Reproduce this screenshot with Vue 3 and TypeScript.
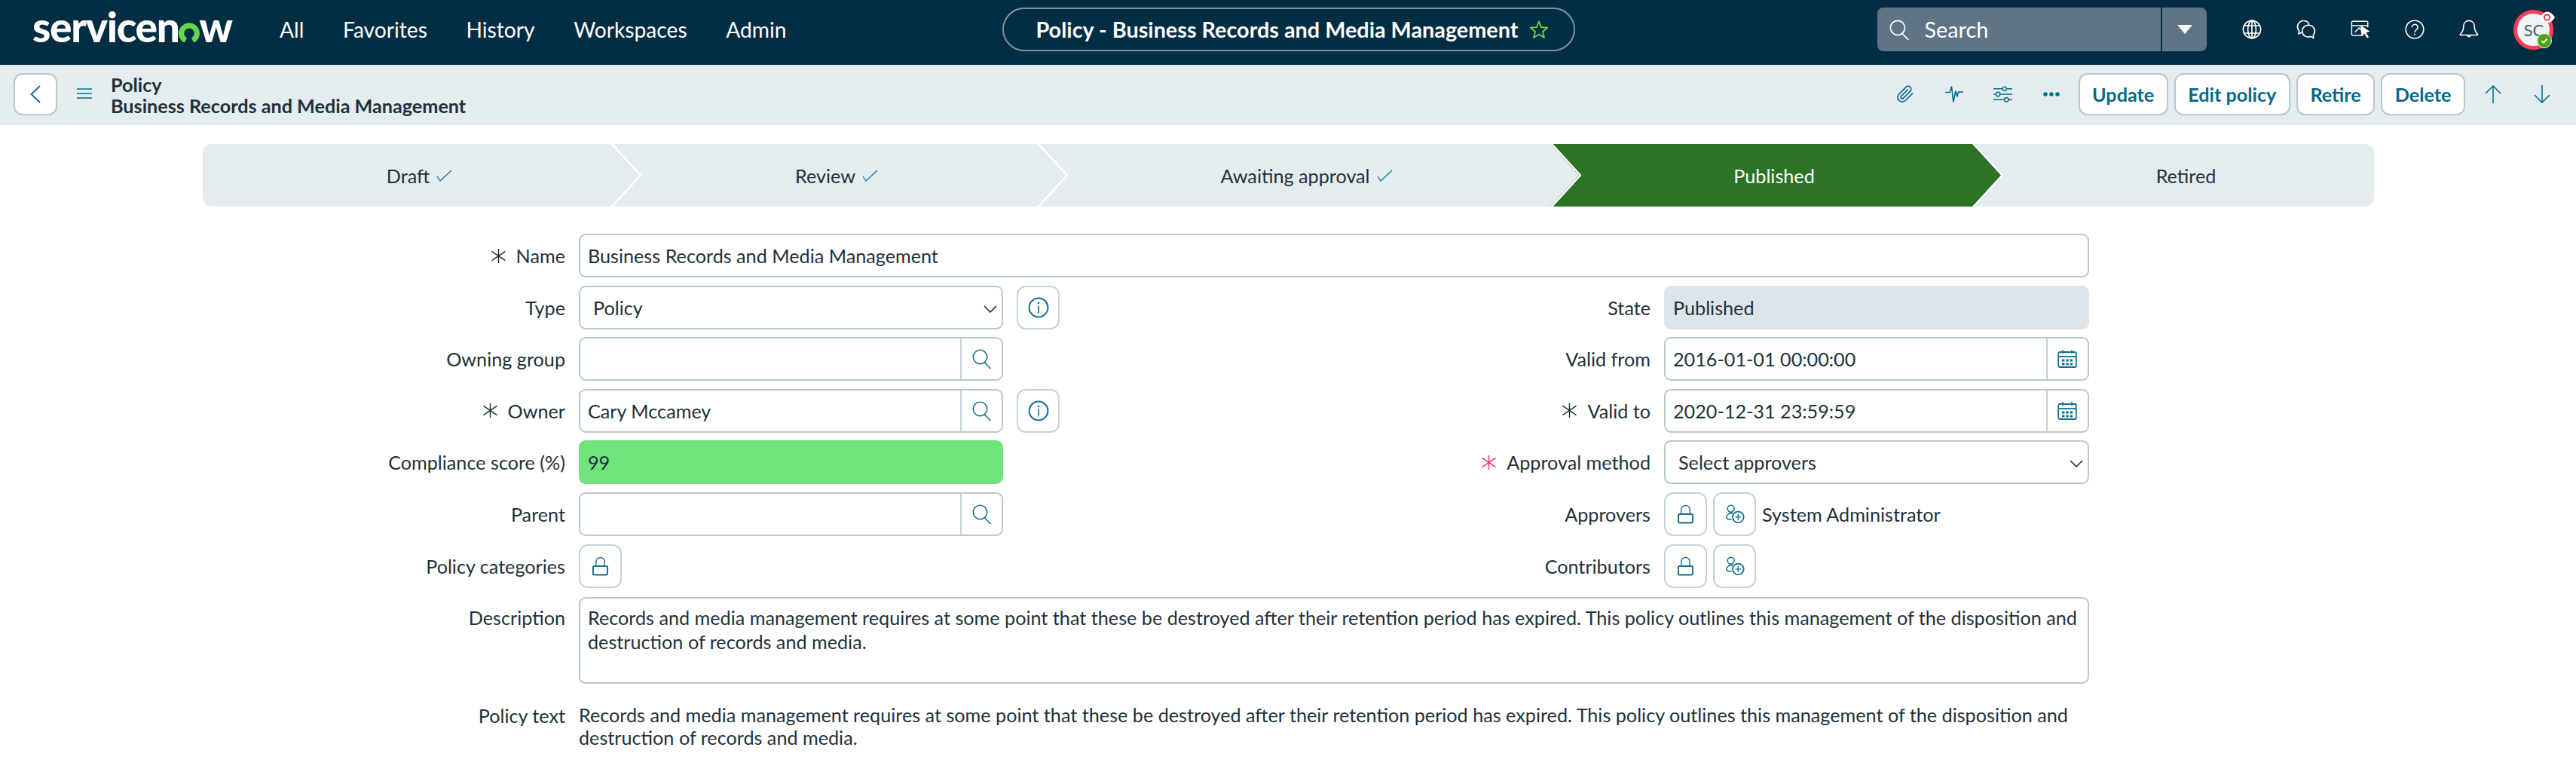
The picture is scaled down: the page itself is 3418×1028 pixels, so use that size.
<script setup lang="ts">
interface Step {
  name: string
  done?: boolean
  current?: boolean
}

const navItems = ['All', 'Favorites', 'History', 'Workspaces', 'Admin']
const headerIcons = ['i-globe', 'i-chat', 'i-window', 'i-help', 'i-bell']
const actions = ['Update', 'Edit policy', 'Retire', 'Delete']
const steps: Step[] = [
  { name: 'Draft', done: true },
  { name: 'Review', done: true },
  { name: 'Awaiting approval', done: true },
  { name: 'Published', current: true },
  { name: 'Retired' }
]
const policyCopy =
  'Records and media management requires at some point that these be destroyed after their retention period has expired. This policy outlines this management of the disposition and destruction of records and media.'
</script>

<template>
  <svg class="sprite" xmlns="http://www.w3.org/2000/svg">
    <symbol id="i-search" viewBox="0 0 26 26"><circle cx="10.5" cy="10.5" r="9.2" fill="none" stroke="currentColor" stroke-width="1.6"/><path d="M16.5 18l7.5 7.5" fill="none" stroke="currentColor" stroke-width="1.6" stroke-linecap="round"/></symbol>
    <symbol id="i-info" viewBox="0 0 28 28"><circle cx="14" cy="14" r="12.4" fill="none" stroke="currentColor" stroke-width="2"/><path d="M14 12v9" stroke="currentColor" stroke-width="1.6" stroke-linecap="round"/><circle cx="14" cy="8" r="1.3" fill="currentColor"/></symbol>
    <symbol id="i-lock" viewBox="0 0 24 26"><path d="M6 13V7a6 6 0 0 1 12 0v6" fill="none" stroke="currentColor" stroke-width="1.4"/><rect x="2" y="13" width="20" height="12" rx="2" fill="none" stroke="currentColor" stroke-width="2"/></symbol>
    <symbol id="i-adduser" viewBox="0 0 28 26"><circle cx="9" cy="5.5" r="4.6" fill="none" stroke="currentColor" stroke-width="1.6"/><path d="M11.5 12a6.5 6.5 0 0 0-8.5 4.5c-.4 2 1 3.5 3 3.5h4" fill="none" stroke="currentColor" stroke-width="1.6"/><circle cx="19" cy="17" r="7.6" fill="none" stroke="currentColor" stroke-width="1.8"/><path d="M19 13v8M15 17h8" stroke="currentColor" stroke-width="1.5"/></symbol>
    <symbol id="i-cal" viewBox="0 0 26 24"><rect x="1.2" y="3" width="23.6" height="20" rx="2" fill="none" stroke="currentColor" stroke-width="1.8"/><path d="M1 9h24" stroke="currentColor" stroke-width="1.8"/><path d="M7 0v5M19 0v5" stroke="currentColor" stroke-width="1.4"/><path d="M6 12.5h3.4v3H6zM11.3 12.5h3.4v3h-3.4zM16.6 12.5H20v3h-3.4zM6 17.5h3.4v3H6zM11.3 17.5h3.4v3h-3.4zM16.6 17.5H20v3h-3.4z" fill="currentColor"/></symbol>
    <symbol id="i-req" viewBox="0 0 22 20"><path d="M11 0v20M1.500 3.500l19 13M20.500 3.500l-19 13" fill="none" stroke="currentColor" stroke-width="1.500"/></symbol>
    <symbol id="i-chev" viewBox="0 0 18 10"><path d="M1 1l8 8 8-8" fill="none" stroke="currentColor" stroke-width="1.6"/></symbol>
    <symbol id="i-globe" viewBox="0 0 26 26"><g fill="none" stroke="currentColor" stroke-width="1.7"><circle cx="13" cy="13" r="11.6"/><ellipse cx="13" cy="13" rx="5.4" ry="11.6"/><path d="M13 1.4v23.2M2.6 8h20.8M2.6 18h20.8"/></g></symbol>
    <symbol id="i-chat" viewBox="0 0 26 26"><g fill="none" stroke="currentColor" stroke-width="1.7" stroke-linejoin="round"><path d="M9.5 1.5a8 8 0 0 0-6 13.2L3 19l4.2-2"/><path d="M9.5 1.5a8 8 0 0 1 7.6 5.4"/><path d="M16.5 7.500a7.800 7.800 0 0 1 5.800 13l.5 4-4-2.200a7.800 7.800 0 1 1-2.300-14.800z"/></g></symbol>
    <symbol id="i-window" viewBox="0 0 28 26"><g fill="none" stroke="currentColor" stroke-width="1.6"><path d="M18 21.500H3a1.500 1.500 0 0 1-1.500-1.500V3A1.500 1.500 0 0 1 3 1.500h20A1.500 1.500 0 0 1 24.500 3v7"/><path d="M1.500 7.500h23M6 17l6-6 3 3"/></g><path d="M14 7l13.500 9-5.500 1.500 4 6.500-2.500 1.500-4-6.500-4 3.500z" fill="currentColor"/></symbol>
    <symbol id="i-help" viewBox="0 0 28 28"><circle cx="14" cy="14" r="12.700" fill="none" stroke="currentColor" stroke-width="1.700"/><path d="M10 11a4.200 4.200 0 1 1 6.600 3.500c-1.500 1-2.600 1.800-2.600 3.500" fill="none" stroke="currentColor" stroke-width="1.700"/><circle cx="14" cy="21" r="1.200" fill="currentColor"/></symbol>
    <symbol id="i-bell" viewBox="0 0 28 28"><g fill="none" stroke="currentColor" stroke-width="1.700" stroke-linejoin="round"><path d="M14 1.500c-5 0-7.800 3.800-7.800 8.500 0 5-1.400 8-4.700 11v1h25v-1c-3.300-3-4.700-6-4.700-11 0-4.700-2.800-8.500-7.800-8.500z"/><path d="M11.500 22.500a2.600 2.600 0 0 0 5 0"/></g></symbol>
    <symbol id="i-clip" viewBox="0 0 24 24"><path d="M21.440 11.050l-9.190 9.190a6 6 0 0 1-8.490-8.490l9.190-9.190a4 4 0 0 1 5.660 5.660l-9.200 9.190a2 2 0 0 1-2.830-2.830l8.490-8.480" fill="none" stroke="currentColor" stroke-width="1.700" stroke-linecap="round" stroke-linejoin="round"/></symbol>
    <symbol id="i-pulse" viewBox="0 0 24 22"><path d="M0 8.500h6L8.500 1l2.300 20 3-14 2 7 1.700-6H24" fill="none" stroke="currentColor" stroke-width="1.600" stroke-linejoin="round"/></symbol>
    <symbol id="i-sliders" viewBox="0 0 26 22"><g fill="none" stroke="currentColor" stroke-width="1.500"><path d="M0 3.500h12.500M18 3.500h8M0 11h3.500M9 11h17M0 18.500h15M21 18.500h5"/><circle cx="15.300" cy="3.500" r="2.800"/><circle cx="6.300" cy="11" r="2.800"/><circle cx="18" cy="18.500" r="2.800"/></g></symbol>
    <symbol id="i-up" viewBox="0 0 22 24"><path d="M11 24V1M1 11L11 1l10 10" fill="none" stroke="currentColor" stroke-width="1.500"/></symbol>
    <symbol id="i-down" viewBox="0 0 22 24"><path d="M11 0v23M1 13l10 10 10-10" fill="none" stroke="currentColor" stroke-width="1.500"/></symbol>
  </svg>

  <header class="topbar">
    <div class="logo">
      <span>servicen</span>
      <svg class="logo-o" viewBox="0 0 28 29"><path d="M9.400 26.500a10.300 10.300 0 1 1 9.200 0" fill="none" stroke="#62d84e" stroke-width="7.200"/></svg>
      <span>w</span>
    </div>
    <nav class="nav">
      <a v-for="item in navItems" :key="item">{{ item }}</a>
    </nav>
    <div class="pill">
      <span>Policy - Business Records and Media Management</span>
      <svg class="star" viewBox="0 0 26 24"><path d="M13 1.500l3 7.700 8.300.5-6.400 5.300 2.100 8-7-4.500-7 4.500 2.100-8L1.700 9.700 10 9.200z" fill="none" stroke="#62d84e" stroke-width="1.800" stroke-linejoin="round"/></svg>
    </div>
    <div class="search">
      <div class="search-main">
        <svg class="search-ic"><use href="#i-search" /></svg>
        <span>Search</span>
      </div>
      <div class="search-drop"><i class="tri"></i></div>
    </div>
    <div class="head-icons">
      <svg v-for="ic in headerIcons" :key="ic" class="head-ic"><use :href="'#' + ic" /></svg>
    </div>
    <div class="avatar">
      <span>SC</span>
      <i class="eye"><svg viewBox="0 0 20 16"><path d="M0 8c3-5 6.500-7.500 10-7.500S17 3 20 8c-3 5-6.500 7.500-10 7.500S3 13 0 8z" fill="#fff"/><circle cx="9.500" cy="8" r="3.600" fill="none" stroke="#e8384f" stroke-width="2"/></svg></i>
      <i class="ok"><svg viewBox="0 0 10 10"><path d="M1.500 5.200l2.500 2.300 4.500-5" fill="none" stroke="#fff" stroke-width="2"/></svg></i>
    </div>
  </header>

  <section class="actionbar">
    <button class="btn back"><svg viewBox="0 0 14 24"><path d="M13 1L1.500 12 13 23" fill="none" stroke="currentColor" stroke-width="1.800"/></svg></button>
    <svg class="burger" viewBox="0 0 20 14"><path d="M0 1h20M0 7h20M0 13h20" stroke="currentColor" stroke-width="1.700"/></svg>
    <div class="crumb">
      <div>Policy</div>
      <div>Business Records and Media Management</div>
    </div>
    <div class="bar-right">
      <svg class="a-ic clip"><use href="#i-clip" /></svg>
      <svg class="a-ic pulse"><use href="#i-pulse" /></svg>
      <svg class="a-ic sliders"><use href="#i-sliders" /></svg>
      <svg class="a-ic dots" viewBox="0 0 22 6"><circle cx="3" cy="3" r="2.700" fill="currentColor"/><circle cx="11" cy="3" r="2.700" fill="currentColor"/><circle cx="19" cy="3" r="2.700" fill="currentColor"/></svg>
      <div class="btns">
        <button v-for="a in actions" :key="a" class="btn">{{ a }}</button>
      </div>
      <svg class="a-ic arrow up"><use href="#i-up" /></svg>
      <svg class="a-ic arrow"><use href="#i-down" /></svg>
    </div>
  </section>

  <main class="page">
    <div class="stepper">
      <div v-for="(s, idx) in steps" :key="s.name" class="step" :class="{ current: s.current }">
        <span class="step-label">{{ s.name }}</span>
        <svg v-if="s.done" class="check" viewBox="0 0 21 16"><path d="M1 9l4 6L20 1" fill="none" stroke="currentColor" stroke-width="1.300"/></svg>
        <svg v-if="idx < steps.length - 1" class="sep" viewBox="0 0 42 83" preserveAspectRatio="none"><path d="M1 -2L41 41.500 1 85" fill="none" stroke="#fff" stroke-width="2.500" stroke-linejoin="round"/></svg>
      </div>
    </div>

    <div class="form">
      <label class="lbl"><svg class="req"><use href="#i-req" /></svg>Name</label>
      <div class="field wide">Business Records and Media Management</div>

      <label class="lbl">Type</label>
      <div class="field select">Policy<svg class="chev"><use href="#i-chev" /></svg></div>
      <button class="icon-btn"><svg class="info"><use href="#i-info" /></svg></button>
      <label class="lbl r">State</label>
      <div class="field readonly r">Published</div>

      <label class="lbl">Owning group</label>
      <div class="field addon"><span></span><i><svg class="lens"><use href="#i-search" /></svg></i></div>
      <label class="lbl r">Valid from</label>
      <div class="field addon r"><span>2016-01-01 00:00:00</span><i><svg class="cal"><use href="#i-cal" /></svg></i></div>

      <label class="lbl"><svg class="req"><use href="#i-req" /></svg>Owner</label>
      <div class="field addon"><span>Cary Mccamey</span><i><svg class="lens"><use href="#i-search" /></svg></i></div>
      <button class="icon-btn"><svg class="info"><use href="#i-info" /></svg></button>
      <label class="lbl r"><svg class="req"><use href="#i-req" /></svg>Valid to</label>
      <div class="field addon r"><span>2020-12-31 23:59:59</span><i><svg class="cal"><use href="#i-cal" /></svg></i></div>

      <label class="lbl">Compliance score (%)</label>
      <div class="field score">99</div>
      <label class="lbl r"><svg class="req red"><use href="#i-req" /></svg>Approval method</label>
      <div class="field select r">Select approvers<svg class="chev"><use href="#i-chev" /></svg></div>

      <label class="lbl">Parent</label>
      <div class="field addon"><span></span><i><svg class="lens"><use href="#i-search" /></svg></i></div>
      <label class="lbl r">Approvers</label>
      <div class="list-field r">
        <button class="icon-btn"><svg class="lock"><use href="#i-lock" /></svg></button>
        <button class="icon-btn"><svg class="adduser"><use href="#i-adduser" /></svg></button>
        <span>System Administrator</span>
      </div>

      <label class="lbl">Policy categories</label>
      <div class="list-field">
        <button class="icon-btn"><svg class="lock"><use href="#i-lock" /></svg></button>
      </div>
      <label class="lbl r">Contributors</label>
      <div class="list-field r">
        <button class="icon-btn"><svg class="lock"><use href="#i-lock" /></svg></button>
        <button class="icon-btn"><svg class="adduser"><use href="#i-adduser" /></svg></button>
      </div>

      <label class="lbl top desc-l">Description</label>
      <div class="field wide desc">{{ policyCopy }}</div>

      <label class="lbl top text-l">Policy text</label>
      <div class="wide plain">{{ policyCopy }}</div>
    </div>
  </main>
</template>

<style scoped>
.sprite {
  position: absolute;
  width: 0;
  height: 0;
}

.topbar {
  height: 86px;
  box-sizing: border-box;
  padding: 0 0 8px 43px;
  background: #032d43;
  color: #fff;
  display: flex;
  align-items: center;
  font-family: Lato, "Liberation Sans", sans-serif;
}

.logo {
  display: flex;
  align-items: baseline;
  width: 266px;
  margin-bottom: 9px;
  font-size: 55px;
  line-height: 60px;
  font-weight: 900;
  letter-spacing: -1.300px;
  color: #fff;
}
.logo-o {
  width: 28px;
  height: 29px;
  margin: 0 0 -1px -1px;
  flex: none;
}

.nav {
  display: flex;
  gap: 51.600px;
  margin-left: 62px;
  font-size: 28.200px;
}

.pill {
  margin-left: 287px;
  width: 760px;
  height: 58px;
  border: 2px solid #7d929e;
  border-radius: 29px;
  display: flex;
  align-items: center;
  padding-left: 42px;
  box-sizing: border-box;
  font-size: 28.800px;
  font-weight: 700;
  white-space: nowrap;
}
.star {
  width: 26px;
  height: 24px;
  margin-left: 14px;
}

.search {
  margin-left: 401px;
  width: 437px;
  height: 58px;
  background: #5f7585;
  border-radius: 8px;
  display: flex;
  font-size: 28.800px;
}
.search-main {
  width: 378px;
  display: flex;
  align-items: center;
  padding-left: 16px;
  box-sizing: border-box;
  border-right: 2px solid #032d43;
}
.search-ic {
  width: 27px;
  height: 27px;
  margin-right: 19px;
}
.search-drop {
  flex: 1;
  display: flex;
  align-items: center;
  justify-content: center;
}
.tri {
  border-left: 10px solid transparent;
  border-right: 10px solid transparent;
  border-top: 12px solid #fff;
}

.head-icons {
  display: flex;
  gap: 46px;
  margin-left: 47px;
}
.head-ic {
  width: 26px;
  height: 26px;
}

.avatar {
  position: relative;
  margin-left: 46px;
  width: 53px;
  height: 53px;
  box-sizing: border-box;
  border-radius: 50%;
  border: 5px solid #ff3b55;
  background: #eff5f6;
  color: #4a5c66;
  font-size: 22px;
  display: flex;
  align-items: center;
  justify-content: center;
}
.eye {
  position: absolute;
  top: -3px;
  right: -7px;
  width: 20px;
  height: 16px;
  display: flex;
}
.ok {
  position: absolute;
  right: -3px;
  bottom: -3px;
  width: 14px;
  height: 14px;
  padding: 2px;
  border-radius: 50%;
  background: #4ba30f;
  display: flex;
  box-sizing: content-box;
  border: 1px solid #eff5f6;
}
.ok svg {
  width: 10px;
  height: 10px;
  margin: 2px;
}

.actionbar {
  height: 80px;
  box-sizing: border-box;
  padding: 0 34px 2px 18px;
  background: #e4ecef;
  display: flex;
  align-items: center;
  color: #006e8c;
  font-family: Lato, "Liberation Sans", sans-serif;
}

.btn {
  font-family: inherit;
  height: 56px;
  padding: 0 16.500px;
  background: #fff;
  color: #06698a;
  border: 2px solid #b8c8ce;
  border-radius: 12px;
  font-size: 25.200px;
  font-weight: 700;
  box-sizing: border-box;
}
.back {
  width: 58px;
  padding: 0;
  display: flex;
  align-items: center;
  justify-content: center;
}
.back svg {
  width: 14px;
  height: 24px;
}
.burger {
  width: 20px;
  height: 14px;
  margin-left: 26px;
  margin-top: -2px;
}
.crumb {
  margin: 2px 0 0 25px;
  color: #1e3139;
  font-size: 25.200px;
  font-weight: 700;
  line-height: 28px;
}
.bar-right {
  margin-left: auto;
  display: flex;
  align-items: center;
}
.a-ic {
  flex: none;
}
.clip {
  width: 24px;
  height: 26px;
}
.pulse {
  width: 24px;
  height: 22px;
  margin-left: 41px;
}
.sliders {
  width: 25px;
  height: 22px;
  margin-left: 40px;
}
.dots {
  width: 22px;
  height: 6px;
  margin-left: 41px;
}
.btns {
  display: flex;
  gap: 8px;
  margin-left: 25px;
}
.arrow {
  width: 22px;
  height: 24px;
  margin-left: 43px;
}
.arrow.up {
  margin-left: 26px;
}

.page {
  padding: 25px 0 0 269px;
  color: #1e3139;
  font-family: Lato, "Liberation Sans", sans-serif;
  font-size: 25.200px;
}

.stepper {
  width: 2881px;
  height: 83px;
  display: grid;
  grid-template-columns: 541px 566px 681px 560px 533px;
  background: #e4ecef;
  border-radius: 12px;
  overflow: hidden;
}
.step {
  position: relative;
  display: flex;
  align-items: center;
  justify-content: center;
  padding-left: 34px;
  gap: 9px;
  color: #1e3139;
}
.step-label {
  position: relative;
  z-index: 1;
}
.step.current {
  color: #fff;
}
.step.current::before {
  content: "";
  position: absolute;
  top: 0;
  bottom: 0;
  left: 0;
  right: -38px;
  background: #2d7326;
  clip-path: polygon(0 0, calc(100% - 38px) 0, 100% 50%, calc(100% - 38px) 100%, 0 100%, 38px 50%);
}
.check {
  width: 21px;
  height: 16px;
  color: #0d7fa3;
}
.sep {
  position: absolute;
  z-index: 2;
  top: 0;
  right: -41px;
  width: 42px;
  height: 83px;
}

.form {
  width: 2503px;
  margin: 36px 0 0 1px;
  display: grid;
  grid-template-columns: 480px 563px 57px 766px 563.500px;
  grid-template-rows: repeat(7, 58px) 118px auto;
  column-gap: 18px;
  row-gap: 10.600px;
}
.lbl {
  grid-column: 1;
  display: flex;
  align-items: center;
  justify-content: flex-end;
  white-space: nowrap;
}
.lbl.r {
  grid-column: 4;
}
.lbl.top {
  align-items: flex-start;
  line-height: 32px;
}
.req {
  width: 21px;
  height: 19px;
  margin-right: 13px;
  color: #1e3139;
}
.req.red {
  color: #e8384f;
}
.field {
  grid-column: 2;
  height: 58px;
  box-sizing: border-box;
  border: 2px solid #b8c8ce;
  border-radius: 9px;
  background: #fff;
  display: flex;
  align-items: center;
  padding-left: 10px;
  white-space: nowrap;
}
.r {
  grid-column: 5;
}
.wide {
  grid-column: 2 / -1;
}
.select {
  position: relative;
  padding-left: 17px;
}
.chev {
  position: absolute;
  right: 6px;
  top: 24px;
  width: 18px;
  height: 10px;
}
.readonly {
  background: #dde5eb;
  border-color: #dde5eb;
}
.score {
  background: #71e37c;
  border-color: #71e37c;
}
.addon {
  padding: 0;
}
.addon span {
  flex: 1;
  padding-left: 10px;
}
.addon i {
  width: 55px;
  height: 100%;
  border-left: 2px solid #c5d2d8;
  display: flex;
  align-items: center;
  justify-content: center;
  box-sizing: border-box;
  color: #0e6f8e;
}
.lens {
  width: 26px;
  height: 26px;
}
.cal {
  width: 26px;
  height: 24px;
}
.icon-btn {
  grid-column: 3;
  width: 57px;
  height: 58px;
  padding: 0;
  box-sizing: border-box;
  border: 2px solid #c5d2d8;
  border-radius: 12px;
  background: #fff;
  color: #0e6f8e;
  display: flex;
  align-items: center;
  justify-content: center;
}
.info {
  width: 28px;
  height: 28px;
}
.lock {
  width: 23px;
  height: 26px;
}
.adduser {
  width: 27px;
  height: 26px;
}
.list-field {
  display: flex;
  align-items: center;
  gap: 8px;
}
.desc-l {
  padding-top: 13px;
}
.desc {
  height: 115px;
  margin-top: 2px;
  align-items: flex-start;
  white-space: normal;
  line-height: 32px;
  padding: 9px 6px 0 10px;
}
.text-l {
  padding-top: 14px;
}
.plain {
  padding-top: 14px;
  line-height: 30.500px;
}
</style>

<style>
html,
body {
  background: #fff;
  overflow: hidden;
}
</style>
